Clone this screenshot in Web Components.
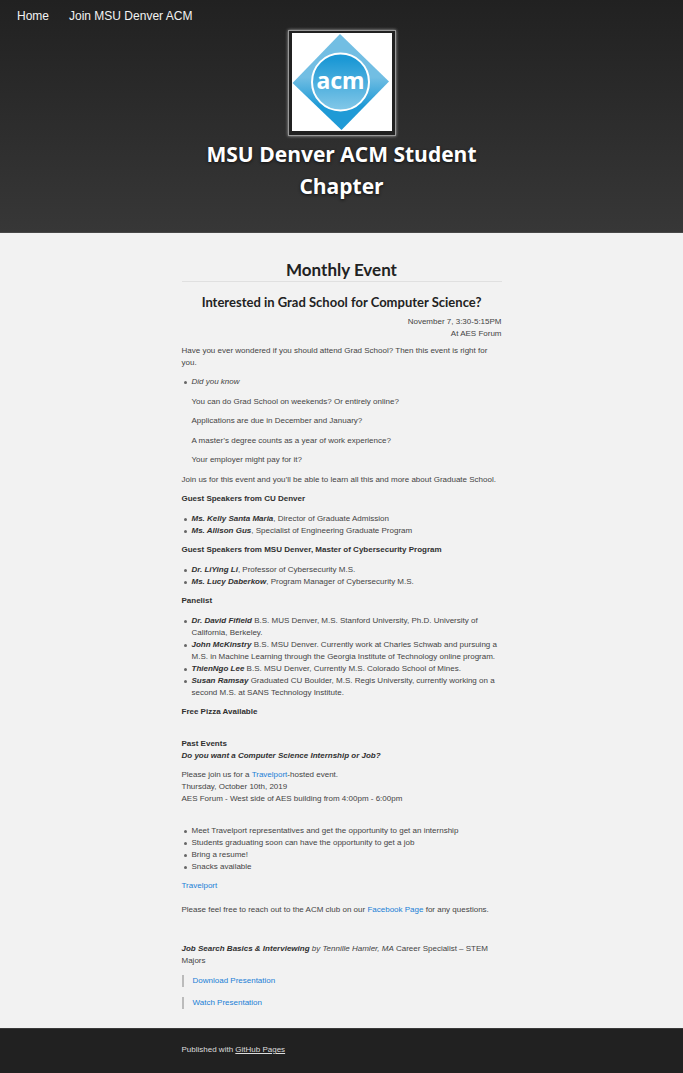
<!DOCTYPE html>
<html lang="en">
<head>
<meta charset="utf-8">
<meta name="viewport" content="width=device-width, initial-scale=1">
<title>MSU Denver ACM Student Chapter</title>
<style>
  body {
    margin: 0;
    min-height: 100vh;
    background: #212121;
    color: #444;
    font: 8px/12px "Liberation Sans", Arial, sans-serif;
  }
  a { color: #1a7fd6; text-decoration: none; }
  b { color: #303030; }
  p { margin: 7px 0 0; }
  quote-link + quote-link { margin-top: 10px; }
</style>
</head>
<body>
<site-banner>
  <top-nav slot="nav">
    <top-link href="#home">Home</top-link>
    <top-link href="#join">Join MSU Denver ACM</top-link>
  </top-nav>
  <acm-logo slot="logo"></acm-logo>
  MSU Denver ACM Student Chapter
</site-banner>

<page-content>
  <span slot="title">Monthly Event</span>
  <span slot="subtitle">Interested in Grad School for Computer Science?</span>
  <span slot="when">November 7, 3:30-5:15PM<br>At AES Forum</span>

  <text-block class="lead">Have you ever wondered if you should attend Grad School? Then this event is right for you.</text-block>
  <bullet-list class="tight">
    <bullet-item><i>Did you know</i>
      <fact-list>
        <p>You can do Grad School on weekends? Or entirely online?</p>
        <p>Applications are due in December and January?</p>
        <p>A master’s degree counts as a year of work experience?</p>
        <p>Your employer might pay for it?</p>
      </fact-list>
    </bullet-item>
  </bullet-list>
  <text-block class="loose">Join us for this event and you’ll be able to learn all this and more about Graduate School.</text-block>
  <p><b>Guest Speakers from CU Denver</b></p>
  <bullet-list>
    <bullet-item><b><i>Ms. Kelly Santa Maria</i></b>, Director of Graduate Admission</bullet-item>
    <bullet-item><b><i>Ms. Allison Gus</i></b>, Specialist of Engineering Graduate Program</bullet-item>
  </bullet-list>
  <p><b>Guest Speakers from MSU Denver, Master of Cybersecurity Program</b></p>
  <bullet-list>
    <bullet-item><b><i>Dr. LiYing Li</i></b>, Professor of Cybersecurity M.S.</bullet-item>
    <bullet-item><b><i>Ms. Lucy Daberkow</i></b>, Program Manager of Cybersecurity M.S.</bullet-item>
  </bullet-list>
  <p><b>Panelist</b></p>
  <bullet-list>
    <bullet-item><b><i>Dr. David Fifield</i></b> B.S. MUS Denver, M.S. Stanford University, Ph.D. University of California, Berkeley.</bullet-item>
    <bullet-item><b><i>John McKinstry</i></b> B.S. MSU Denver. Currently work at Charles Schwab and pursuing a M.S. in Machine Learning through the Georgia Institute of Technology online program.</bullet-item>
    <bullet-item><b><i>ThienNgo Lee</i></b> B.S. MSU Denver, Currently M.S. Colorado School of Mines.</bullet-item>
    <bullet-item><b><i>Susan Ramsay</i></b> Graduated CU Boulder, M.S. Regis University, currently working on a second M.S. at SANS Technology Institute.</bullet-item>
  </bullet-list>
  <p><b>Free Pizza Available</b></p>

  <text-block class="section"><b>Past Events<br><i>Do you want a Computer Science Internship or Job?</i></b></text-block>
  <p>Please join us for a <a href="#travelport">Travelport</a>-hosted event.<br>Thursday, October 10th, 2019<br>AES Forum - West side of AES building from 4:00pm - 6:00pm</p>
  <bullet-list class="section">
    <bullet-item>Meet Travelport representatives and get the opportunity to get an internship</bullet-item>
    <bullet-item>Students graduating soon can have the opportunity to get a job</bullet-item>
    <bullet-item>Bring a resume!</bullet-item>
    <bullet-item>Snacks available</bullet-item>
  </bullet-list>
  <p><a href="#travelport">Travelport</a><br><br>Please feel free to reach out to the ACM club on our <a href="#facebook">Facebook Page</a> for any questions.</p>
  <text-block class="break"><b><i>Job Search Basics &amp; Interviewing</i></b> <i>by Tennille Hamler, MA</i> Career Specialist – STEM Majors</text-block>
  <quote-link href="#download">Download Presentation</quote-link>
  <quote-link href="#watch">Watch Presentation</quote-link>
</page-content>

<page-footer>Published with <span slot="link">GitHub Pages</span></page-footer>

<script>
  function define(name, markup, setup) {
    customElements.define(name, class extends HTMLElement {
      constructor() {
        super();
        const template = document.createElement("template");
        template.innerHTML = markup;
        this.attachShadow({ mode: "open" }).append(template.content.cloneNode(true));
      }
      connectedCallback() {
        if (setup) setup(this);
      }
    });
  }

  function linkHref(host) {
    host.shadowRoot.querySelector("a").href = host.getAttribute("href");
  }

  define("site-banner", `
    <style>
      :host {
        display: block;
        padding-bottom: 30px;
        border-bottom: 1px solid #484848;
        background: linear-gradient(#212121, #373737);
        color: #fff;
      }
      header { display: flex; flex-direction: column; align-items: center; }
      slot[name="nav"] { display: block; align-self: stretch; }
      h1 {
        box-sizing: border-box;
        width: 100%;
        max-width: 320px;
        margin: 2px 0 0;
        font: 700 21px/32px "Open Sans", "Noto Sans", sans-serif;
        text-align: center;
        text-shadow: 0 1px 3px #111;
      }
    </style>
    <header>
      <slot name="nav"></slot>
      <slot name="logo"></slot>
      <h1><slot></slot></h1>
    </header>`);

  define("top-nav", `
    <style>
      :host { display: block; padding: 8px 17px 6px; }
      nav { display: flex; gap: 20px; }
    </style>
    <nav><slot></slot></nav>`);

  define("top-link", `
    <style>
      :host { display: block; font-size: 12px; line-height: 16px; }
      a { color: #f2f2f2; text-decoration: none; }
    </style>
    <a><slot></slot></a>`, linkHref);

  define("acm-logo", `
    <style>
      :host {
        display: block;
        box-sizing: border-box;
        width: 108px;
        padding: 2px 3px 4px;
        border: 1px solid #999;
        background: #212121;
        box-shadow: 0 0 3px #aaa;
      }
      svg { display: block; width: 100%; height: auto; background: #fff; }
    </style>
    <svg viewBox="0 0 100 98" role="img" aria-label="acm">
      <defs>
        <linearGradient id="diamond" x1="0" y1="0" x2="0" y2="1">
          <stop offset="0.45" stop-color="#72bee3"/>
          <stop offset="0.75" stop-color="#1f9ad6"/>
        </linearGradient>
        <linearGradient id="disc" x1="0" y1="0" x2="0" y2="1">
          <stop offset="0.1" stop-color="#1b98d5"/>
          <stop offset="1" stop-color="#84c8e8"/>
        </linearGradient>
      </defs>
      <path d="M48 1L97 48.500L49.500 97L0.500 50Z" fill="url(#diamond)"/>
      <circle cx="48.500" cy="49" r="28.500" fill="url(#disc)" stroke="#fff" stroke-width="2"/>
      <text x="48.500" y="56" text-anchor="middle" fill="#fff" font-family="Noto Sans, sans-serif" font-weight="700" font-size="23">acm</text>
    </svg>`);

  define("page-content", `
    <style>
      :host { display: block; padding: 25px 20px 19px; background: #f2f2f2; }
      main { max-width: 320px; margin: 0 auto; }
      h2, h3 {
        margin: 0;
        color: #222;
        font-family: Lato, "Open Sans", sans-serif;
        font-weight: 700;
        text-align: center;
      }
      h2 { border-bottom: 1px solid #e0e0e0; font-size: 17px; line-height: 23px; }
      h3 { margin-top: 10px; font-size: 13px; line-height: 20px; }
      .when { margin-top: 4px; text-align: right; }
    </style>
    <main>
      <h2><slot name="title"></slot></h2>
      <h3><slot name="subtitle"></slot></h3>
      <div class="when"><slot name="when"></slot></div>
      <slot></slot>
    </main>`);

  define("text-block", `
    <style>
      :host { display: block; margin-top: 7px; }
      :host(.lead) { margin-top: 5px; }
      :host(.loose) { margin-top: 8px; }
      :host(.section) { margin-top: 20px; }
      :host(.break) { margin-top: 27px; }
      p { margin: 0; }
    </style>
    <p><slot></slot></p>`);

  define("bullet-list", `
    <style>
      :host { display: block; margin-top: 8px; }
      :host(.tight) { margin-top: 7px; }
      :host(.section) { margin-top: 20px; }
    </style>
    <div role="list"><slot></slot></div>`);

  define("bullet-item", `
    <style>
      :host { display: grid; grid-template-columns: 10px 1fr; }
      .dot {
        width: 3px;
        height: 3px;
        margin: 5px 0 0 2px;
        border-radius: 2px;
        background: #666;
      }
    </style>
    <span class="dot"></span>
    <div role="listitem"><slot></slot></div>`);

  define("fact-list", `
    <style>
      :host { display: block; }
      ::slotted(p:nth-of-type(odd)) { padding-top: 1px; }
    </style>
    <slot></slot>`);

  define("quote-link", `
    <style>
      :host { display: block; margin-top: 8px; }
      blockquote { margin: 0; padding-left: 9px; border-left: 2px solid #bbb; }
      a { color: #1a7fd6; text-decoration: none; }
    </style>
    <blockquote><a><slot></slot></a></blockquote>`, linkHref);

  define("page-footer", `
    <style>
      :host {
        display: block;
        padding: 15px 20px 17px;
        border-top: 1px solid #3a3a3a;
        background: #212121;
        color: #ddd;
      }
      footer { max-width: 320px; margin: 0 auto; }
      a { color: inherit; text-decoration: underline; }
    </style>
    <footer><slot></slot><a href="https://pages.github.com"><slot name="link"></slot></a></footer>`);
</script>
</body>
</html>
